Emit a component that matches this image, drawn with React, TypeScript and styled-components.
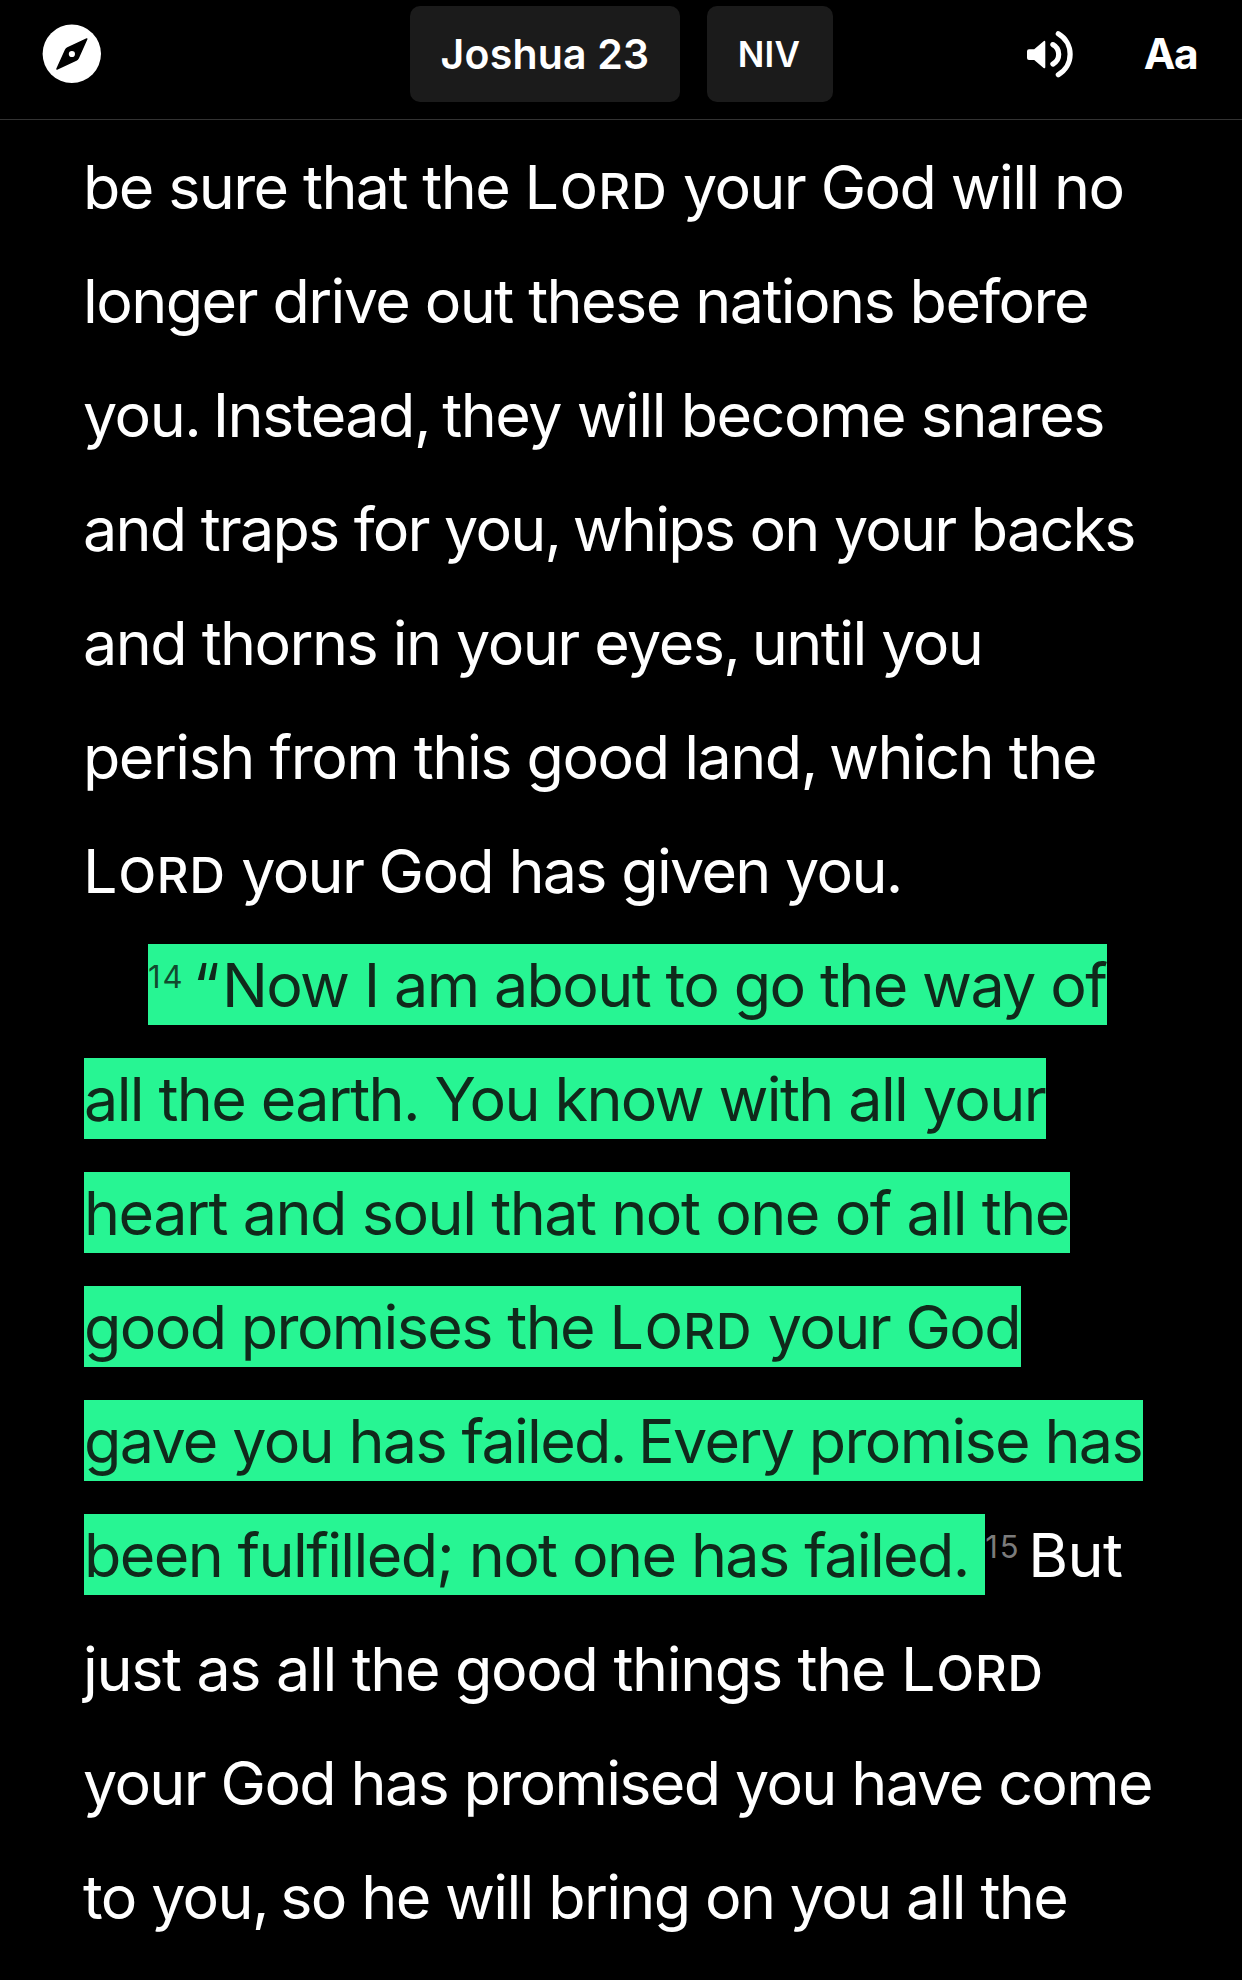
import React from 'react';
import styled, { createGlobalStyle } from 'styled-components';

const GlobalStyle = createGlobalStyle`
  html, body {
    margin: 0;
    background: #000;
  }
  body {
    font-family: Inter, 'Liberation Sans', sans-serif;
    color: #fff;
  }
`;

const Screen = styled.div`
  width: 1242px;
  height: 1980px;
  display: flex;
  flex-direction: column;
  overflow: hidden;
  background: #000;
`;

const Header = styled.header`
  box-sizing: border-box;
  flex: none;
  height: 120px;
  padding: 6px 45px 17px 42px;
  display: grid;
  grid-template-columns: 368px auto 1fr;
  align-items: center;
  border-bottom: 1px solid #333;
`;

const IconButton = styled.button`
  display: flex;
  width: max-content;
  padding: 0;
  border: 0;
  background: none;
  color: #fff;
`;

const Pickers = styled.div`
  display: flex;
  gap: 27px;
`;

const Picker = styled.button<{ $width: number; $size: number; $nudge?: number }>`
  box-sizing: border-box;
  width: ${(p) => p.$width}px;
  height: 96px;
  padding: 0 ${(p) => p.$nudge ?? 0}px 0 0;
  border: 0;
  border-radius: 10px;
  background: #1b1b1b;
  color: #fff;
  font: 600 ${(p) => p.$size}px Inter, sans-serif;
  letter-spacing: 0.2px;
`;

const Actions = styled.div`
  display: flex;
  justify-content: flex-end;
  align-items: center;
  gap: 70px;
`;

const TextSettings = styled.button`
  padding: 0 0 1px;
  border: 0;
  background: none;
  color: #fff;
  font: 700 42.5px Inter, sans-serif;
  letter-spacing: -1.6px;
`;

const Passage = styled.main`
  padding: 10px 0 0 83px;
`;

const Line = styled.div<{ $tracking: number; $indent?: boolean }>`
  height: 114px;
  padding-left: ${(p) => (p.$indent ? 64 : 0)}px;
  font-size: 61px;
  line-height: 114px;
  letter-spacing: ${(p) => p.$tracking}px;
  white-space: pre;
`;

const Highlight = styled.mark`
  margin-left: 1px;
  padding: 4px 1px 3px 0;
  background: #27f593;
  color: #10291b;
`;

const Divine = styled.span`
  letter-spacing: 0.9px;
`;

const SmallCaps = styled.span`
  font-size: 49px;
  font-weight: 500;
  line-height: 1;
`;

const VerseNumber = styled.span<{ $width: number; $marked?: boolean }>`
  position: relative;
  top: -19px;
  display: inline-block;
  width: ${(p) => p.$width}px;
  color: ${(p) => (p.$marked ? '#124a2e' : '#7b7b7b')};
  font-size: 31px;
  font-weight: 400;
  line-height: 1;
  letter-spacing: 1.8px;
`;

const Tracked = styled.span<{ $by: number }>`
  letter-spacing: ${(p) => p.$by}px;
`;

/* Punctuation and the space after it, set tighter than the words. */
const Stop = ({ children }: { children: string }) => <Tracked $by={-3.2}>{children + ' '}</Tracked>;

const Lord = () => (
  <Divine>
    L<SmallCaps>ORD</SmallCaps>
  </Divine>
);

const CompassIcon = () => (
  <svg width="60" height="60" viewBox="0 0 60 60" aria-hidden="true">
    <circle cx="29.8" cy="29.8" r="29.2" fill="#fff" />
    <path
      d="M44.8 15 L25.6 24 Q24.2 24.7 23.5 26.1 L14.9 45 L34.2 36 Q35.6 35.3 36.3 33.9 Z"
      fill="#000"
      stroke="#000"
      strokeWidth="1.4"
      strokeLinejoin="round"
    />
    <circle cx="29.9" cy="30" r="3.1" fill="#fff" />
  </svg>
);

const SpeakerIcon = () => (
  <svg width="47" height="47" viewBox="0 0 47 47" fill="none" aria-hidden="true">
    <path
      d="M2 18.2 H7.2 L16.6 10.2 Q18.3 9.2 18.3 11.2 V36 Q18.3 38 16.6 37 L7.2 29 H2 Q0 29 0 27 V20.2 Q0 18.2 2 18.2 Z"
      fill="#fff"
    />
    <g stroke="#fff" strokeWidth="5.2" strokeLinecap="round">
      <path d="M25.9 13.6 A11.1 11.1 0 0 1 25.9 33.1" />
      <path d="M31.3 2.8 A23.6 23.6 0 0 1 31.3 43.7" />
    </g>
  </svg>
);

export default function App() {
  return (
    <>
      <GlobalStyle />
      <Screen>
        <Header>
          <IconButton aria-label="Discover">
            <CompassIcon />
          </IconButton>
          <Pickers>
            <Picker $width={270} $size={41}>Joshua 23</Picker>
            <Picker $width={126} $size={35} $nudge={2}>NIV</Picker>
          </Pickers>
          <Actions>
            <IconButton aria-label="Listen">
              <SpeakerIcon />
            </IconButton>
            <TextSettings>Aa</TextSettings>
          </Actions>
        </Header>
        <Passage>
          <Line $tracking={-1.62}>be sure that the <Lord /> your God will no</Line>
          <Line $tracking={-1.58}>longer drive out these nations before</Line>
          <Line $tracking={-1.49}>you<Stop>.</Stop>Instead<Stop>,</Stop>they will become snares</Line>
          <Line $tracking={-1.79}>and traps for you<Stop>,</Stop>whips on your backs</Line>
          <Line $tracking={-1.54}>and thorns in your eyes<Stop>,</Stop>until you</Line>
          <Line $tracking={-1.49}>perish from this good land<Stop>,</Stop>which the</Line>
          <Line $tracking={-1.7}><Lord /> your God has given you.</Line>
          <Line $tracking={-1.64} $indent>
            <Highlight><VerseNumber $width={45} $marked>14</VerseNumber><Tracked $by={2}>“</Tracked>Now I am about to go the way of</Highlight>
          </Line>
          <Line $tracking={-1.62}><Highlight>all the earth. You know with all your</Highlight></Line>
          <Line $tracking={-1.46}><Highlight>heart and soul that not one of all the</Highlight></Line>
          <Line $tracking={-1.64}><Highlight>good promises the <Lord /> your God</Highlight></Line>
          <Line $tracking={-1.67}><Highlight>gave you has failed<Stop>.</Stop>Every promise has</Highlight></Line>
          <Line $tracking={-1.61}>
            <Highlight>{'been fulfilled; not one has failed. '}</Highlight>
            <VerseNumber $width={43}>15</VerseNumber>
            <Tracked $by={-0.7}>But</Tracked>
          </Line>
          <Line $tracking={-1.34}>just as all the good things the <Lord /></Line>
          <Line $tracking={-1.66}>your God has promised you have come</Line>
          <Line $tracking={-1.65}>to you<Stop>,</Stop>so he will bring on you all the</Line>
        </Passage>
      </Screen>
    </>
  );
}
